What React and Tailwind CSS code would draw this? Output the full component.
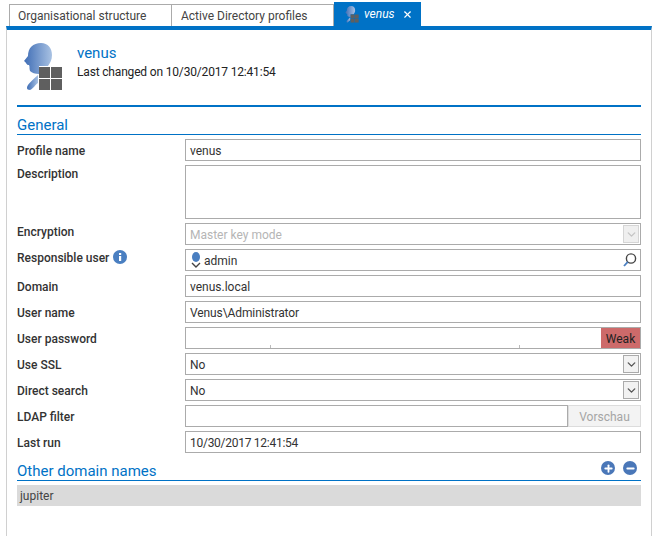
import React from 'react';
import { Plus, Minus, X, ChevronDown } from 'lucide-react';

const ProfileIcon = ({ id, className }) => (
  <svg className={className} viewBox="0 0 40 48">
    <defs>
      <linearGradient id={id} x1="0" y1="0" x2="1" y2="0">
        <stop offset="0" stopColor="#3f6db5" />
        <stop offset="1" stopColor="#a9c2e3" />
      </linearGradient>
    </defs>
    <path d="M1 18 L5 13 C5 5 10 0 18 0 C25 0 29 5 29 12 C29 17 27 20 25 23 L16 23 L16 31 C12 31 9 30 7 28 C6 25 7 24 6 22 C3 22 4 20 1 18 Z" fill={`url(#${id})`} />
    <path d="M4 45 C4 41 10 37 15 32 L15 40 C12 42 10 46 7 47 C5 47 4 46 4 45 Z" fill={`url(#${id})`} />
    <rect x="16" y="24" width="11" height="11" fill="#5f5f5f" />
    <rect x="28" y="24" width="11" height="11" fill="#5f5f5f" />
    <rect x="16" y="36" width="11" height="11" fill="#5f5f5f" />
    <rect x="28" y="36" width="11" height="11" fill="#5f5f5f" />
  </svg>
);

const Field = ({ label, children, extra, labelClass = 'pt-[3px]' }) => (
  <>
    <div className={`flex items-start gap-[4px] font-medium leading-[18px] text-[#333] ${labelClass}`}>
      {label}
      {extra}
    </div>
    {children}
  </>
);

const Box = ({ children, className = 'h-[22px]' }) => (
  <div className={`relative flex items-center border border-[#ababab] bg-white px-[4px] pt-[2px] text-[#333] ${className}`}>
    {children}
  </div>
);

const Select = ({ value, disabled }) => (
  <Box>
    <span className={disabled ? 'text-[#b5b5b5]' : ''}>{value}</span>
    <div className={`absolute right-[1px] top-[1px] flex h-[18px] w-[16px] items-center justify-center border ${disabled ? 'border-[#d5d5d5] bg-[#efefef] text-[#c5c5c5]' : 'border-[#ababab] bg-[#f2f2f2] text-[#555]'}`}>
      <ChevronDown size={13} strokeWidth={2.5} />
    </div>
  </Box>
);

const Heading = ({ children, right }) => (
  <div className="flex h-[21px] items-end justify-between border-b border-[#0072c6] text-[15px] leading-[18px] text-[#0072c6]">
    <span>{children}</span>
    {right}
  </div>
);

export default function App() {
  return (
    <div className="h-[536px] w-[657px] overflow-hidden bg-white font-['Roboto',sans-serif] text-[12px]">
      {/* tabs */}
      <div className="flex h-[26px] items-end pl-[9px] pt-[2px]">
        <div className="flex h-[22px] w-[162px] items-center border-l border-t border-[#ababab] pl-[8px] text-[#444]">Organisational structure</div>
        <div className="flex h-[22px] w-[163px] items-center border-l border-r border-t border-[#ababab] pl-[9px] text-[#444]">Active Directory profiles</div>
        <div className="flex h-[24px] w-[87px] items-center bg-[#0072c6] pl-[11px] text-white">
          <ProfileIcon id="tab-head" className="h-[17px] w-[14px]" />
          <span className="ml-[5px] italic">venus</span>
          <X size={11} strokeWidth={2.5} className="ml-[7px]" />
        </div>
      </div>

      <div className="ml-[6px] h-[510px] w-[646px] border-l border-r border-t-4 border-[#d0d0d0] border-t-[#0072c6]">
        <div className="w-[634px] pl-[10px]">
          {/* header */}
          <div className="flex h-[77px] border-b-2 border-[#0072c6] pl-[6px] pt-[13px]">
            <ProfileIcon id="main-head" className="h-[48px] w-[40px]" />
            <div className="ml-[14px]">
              <div className="text-[15px] leading-[20px] text-[#0072c6]">venus</div>
              <div className="leading-[18px] tracking-[-0.17px] text-[#222]">Last changed on 10/30/2017 12:41:54</div>
            </div>
          </div>

          <div className="w-[624px]">
            <div className="mt-[7px]"><Heading>General</Heading></div>

            <div className="mt-[4px] grid grid-cols-[168px_456px] gap-y-[4px]">
              <Field label="Profile name"><Box>venus</Box></Field>
              <Field label="Description" labelClass="pt-0"><Box className="h-[54px]" /></Field>
              <Field label="Encryption" labelClass="pt-0"><Select value="Master key mode" disabled /></Field>
              <Field
                label="Responsible user"
                labelClass="pt-0"
                extra={
                  <svg width="14" height="14" viewBox="0 0 14 14" className="mt-[1px]">
                    <circle cx="7" cy="7" r="7" fill="#4a7fc1" />
                    <rect x="6" y="6" width="2.2" height="5" fill="#fff" />
                    <rect x="6" y="3" width="2.2" height="2" fill="#fff" />
                  </svg>
                }
              >
                <Box>
                  <svg width="12" height="16" viewBox="0 0 12 16" className="mr-[2px] -mt-[2px]">
                    <ellipse cx="6" cy="5" rx="4" ry="5" fill="#4a7fc1" />
                    <path d="M2 11 L6 15 L10 11" fill="none" stroke="#444" strokeWidth="1.4" />
                  </svg>
                  admin
                  <svg width="16" height="16" viewBox="0 0 16 16" className="absolute right-[2px] top-[2px]">
                    <circle cx="9" cy="6.5" r="4.6" fill="none" stroke="#444" strokeWidth="1.4" />
                    <path d="M5.8 9.8 L2 14" stroke="#4a7fc1" strokeWidth="1.8" />
                  </svg>
                </Box>
              </Field>
              <Field label="Domain"><Box>venus.local</Box></Field>
              <Field label="User name"><Box><span className="tracking-[-0.1px]">Venus\Administrator</span></Box></Field>
              <Field label="User password">
                <Box>
                  <span className="absolute bottom-0 left-[84px] h-[3px] w-px bg-[#bbb]" />
                  <span className="absolute bottom-0 left-[333px] h-[3px] w-px bg-[#bbb]" />
                  <div className="absolute bottom-0 right-0 top-0 flex w-[39px] items-center justify-center bg-[#cd6a6a] pt-[2px] text-[#222]">Weak</div>
                </Box>
              </Field>
              <Field label="Use SSL"><Select value="No" /></Field>
              <Field label="Direct search"><Select value="No" /></Field>
              <Field label="LDAP filter">
                <div className="flex">
                  <div className="flex-1"><Box /></div>
                  <div className="flex h-[22px] w-[73px] items-center justify-center border border-[#dcdcdc] bg-[#f3f3f3] pt-[2px] text-[#a5a5a5]">Vorschau</div>
                </div>
              </Field>
              <Field label="Last run"><Box><span className="tracking-[-0.27px]">10/30/2017 12:41:54</span></Box></Field>
            </div>

            <div className="mt-[7px]">
              <Heading
                right={
                  <div className="mb-[5px] flex gap-[8px] pr-[4px]">
                    <div className="flex h-[14px] w-[14px] items-center justify-center rounded-full bg-[#4a77b8] text-white"><Plus size={11} strokeWidth={4} /></div>
                    <div className="flex h-[14px] w-[14px] items-center justify-center rounded-full bg-[#4a77b8] text-white"><Minus size={11} strokeWidth={4} /></div>
                  </div>
                }
              >
                Other domain names
              </Heading>
            </div>
            <div className="mt-[4px] flex h-[21px] items-center bg-[#dadada] pl-[3px] text-[#444]">jupiter</div>
          </div>
        </div>
      </div>
    </div>
  );
}
